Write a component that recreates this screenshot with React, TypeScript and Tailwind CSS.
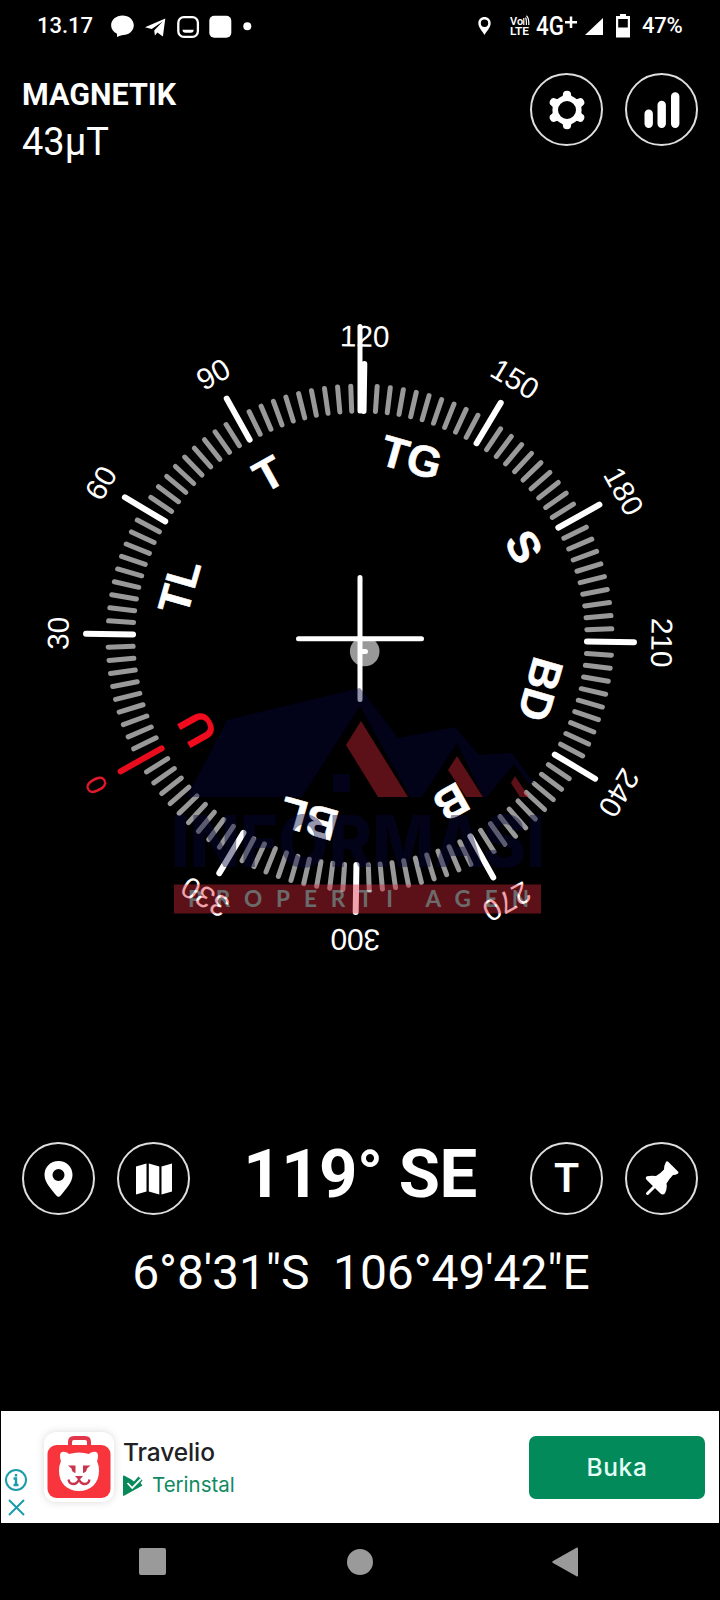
import type { ReactNode } from "react"

const HEADING = 119.1
const CX = 360
const CY = 638

const ticks = Array.from({ length: 120 }, (_, i) => i * 3)
const degrees = [30, 60, 90, 120, 150, 180, 210, 240, 270, 300, 330]
const directions = [
  { label: "TL", at: 45 },
  { label: "T", at: 90 },
  { label: "TG", at: 135 },
  { label: "S", at: 180 },
  { label: "BD", at: 225 },
  { label: "B", at: 270 },
  { label: "BL", at: 315 },
]

function rotateTo(deg: number) {
  return `rotate(${deg - HEADING} ${CX} ${CY})`
}

function RoundButton({ label, children }: { label: string; children: ReactNode }) {
  return (
    <button
      aria-label={label}
      className="flex h-[73px] w-[73px] shrink-0 items-center justify-center rounded-full border-2 border-[#dedede]"
    >
      {children}
    </button>
  )
}

function StatusBar() {
  return (
    <div className="flex h-[52px] items-center pl-[37px] pr-[37px] text-[22px] font-medium leading-none">
      <span className="w-[73px] shrink-0">13.17</span>
      <svg width="142" height="24" viewBox="110 13 142 24" fill="#fff">
        <path d="M122.500 14.500c6.300 0 11.300 4.200 11.300 9.800s-5 9.800-10.500 9.800c-2 .2-4 .8-6.300 2v-3.400c-3.600-1.700-5.900-4.600-5.900-8.400 0-5.600 5-9.800 11.400-9.800z" />
        <path d="M145 26.300l20.300-8.700-2.400 18-5.500-4-2.500 3-.7-5 8.500-9-11 7.300z" />
        <rect x="178.300" y="16.200" width="19.600" height="19.600" rx="5.500" fill="none" stroke="#fff" strokeWidth="2.300" />
        <path d="M182.500 28.800h11.200c0 2-1 3-2.800 3h-5.600c-1.800 0-2.800-1-2.800-3z" />
        <rect x="209.300" y="14.800" width="22" height="22" rx="5" />
        <circle cx="247.300" cy="25.300" r="4" />
      </svg>
      <svg className="ml-auto" width="13" height="18" viewBox="0 0 13 18" fill="#fff">
        <path fillRule="evenodd" d="M6.500 0C2.900 0 .3 2.700.3 6.200c0 4.200 4 7.800 6.200 11.800 2.200-4 6.200-7.600 6.200-11.800C12.700 2.700 10.100 0 6.500 0zm0 2.600a3.700 3.700 0 110 7.400 3.700 3.700 0 010-7.400z" />
      </svg>
      <svg className="ml-[18px] overflow-visible" width="22" height="24" viewBox="0 0 22 24" fill="#fff">
        <text x="1" y="11" fontSize="11" fontWeight="600">Vo</text>
        <path d="M14.800 4v7M16.600 3.500q1 2 .8 7.500M17.500 1.800q2.500 2 2.300 9.200" fill="none" stroke="#fff" strokeWidth="1.200" />
        <text x="1" y="21" fontSize="11.500" fontWeight="600" textLength="19" lengthAdjust="spacingAndGlyphs">LTE</text>
      </svg>
      <svg className="ml-[5px] overflow-visible" width="43" height="30" viewBox="0 0 43 30" fill="#fff">
        <text x="0" y="24" fontSize="26" fontWeight="500" textLength="28" lengthAdjust="spacingAndGlyphs">4G</text>
        <path d="M29 11.300h12M35 5.500v11.600" stroke="#fff" strokeWidth="2.500" />
      </svg>
      <svg className="ml-[6px]" width="18" height="17" viewBox="0 0 18 17" fill="#fff">
        <path d="M18 0v17H0z" />
      </svg>
      <svg className="ml-[13px]" width="14" height="24" viewBox="0 0 14 24" fill="#fff">
        <path fillRule="evenodd" d="M4 0h6v2h4v21.500H0V2h4zM2.200 5v8.500h9.600V5z" />
      </svg>
      <span className="ml-[12px] w-[41px] whitespace-nowrap tracking-[-0.2px]">47%</span>
    </div>
  )
}

function GearIcon() {
  return (
    <svg width="40" height="40" viewBox="-20 -20 40 40" fill="#fff">
      <circle r="11.800" fill="none" stroke="#fff" strokeWidth="5.600" />
      {[0, 60, 120, 180, 240, 300].map((a) => (
        <path key={a} d="M-8-11Q-4.300-12.500-4.100-15.200a4.100 4.100 0 018.200 0Q4.300-12.500 8-11z" transform={`rotate(${a})`} />
      ))}
    </svg>
  )
}

function BarsIcon() {
  return (
    <svg width="36" height="36" viewBox="0 0 36 36" fill="#fff">
      <rect x="0.500" y="17.500" width="8.400" height="18.500" rx="4.200" />
      <rect x="13.500" y="8.800" width="8.400" height="27.200" rx="4.200" />
      <rect x="27" y="0.200" width="8.400" height="35.800" rx="4.200" />
    </svg>
  )
}

// Agency logo laid over the lower half of the dial
function Watermark() {
  return (
    <g opacity="0.42">
      <path
        fill="#05053c"
        d="M360 688L398 738L455 727L479 755L512 753L534 783L528 783L514 764L487 797H483L457 743L422 797H410L360 706L302 797H187L227 720z"
      />
      <rect x="333" y="774" width="17" height="18" fill="#05053c" />
      <g fill="#dc2637">
        <path d="M361 721L346 745L378 797H408z" />
        <path d="M457 756L448 770L466 797H483z" />
        <path d="M515 776L511 783L520 797H529z" />
        <rect x="174" y="884.500" width="367" height="29" />
      </g>
      <text
        x="171"
        y="867"
        fill="#05053c"
        fontSize="71"
        fontWeight="800"
        fontFamily="Inter, sans-serif"
        textLength="374"
        lengthAdjust="spacingAndGlyphs"
      >
        INFORMASI
      </text>
      <text x="188" y="906.500" fill="#fff" fontSize="22.500" fontWeight="700" fontFamily="Lato, sans-serif" textLength="341">
        PROPERTI AGEN
      </text>
    </g>
  )
}

function Compass() {
  return (
    <svg
      width="720"
      height="680"
      viewBox="0 300 720 680"
      strokeLinecap="round"
      textAnchor="middle"
      fontFamily="'Liberation Sans', Arial, sans-serif"
    >
      {ticks.map((deg) => {
        const major = deg % 30 === 0
        return (
          <line
            key={deg}
            x1={CX}
            x2={CX}
            y1={CY - 227}
            y2={CY - (major ? 274 : 252)}
            stroke={deg === 0 ? "#e80c1c" : major ? "#fff" : "#999"}
            strokeWidth={major ? 6 : 5}
            transform={rotateTo(deg)}
          />
        )
      })}
      {degrees.map((deg) => (
        <text key={deg} x={CX} y={CY - 291.500} fontSize="29.800" fill="#fff" transform={rotateTo(deg)}>
          {deg}
        </text>
      ))}
      <text x={CX} y={CY - 292} fontSize="29" fill="#dc1a2c" transform={rotateTo(0)}>
        0
      </text>
      {directions.map(({ label, at }) => (
        <text
          key={label}
          x={CX}
          y={CY - 172.500}
          fontSize="44"
          fontWeight="700"
          fill="#fff"
          stroke="#fff"
          strokeWidth="0.600"
          transform={rotateTo(at)}
        >
          {label}
        </text>
      ))}
      <text
        x={CX}
        y={CY - 171}
        fontSize="45"
        fontWeight="700"
        fill="#f00c1e"
        transform={rotateTo(0)}
      >
        U
      </text>
      <circle cx="364.700" cy="651.500" r="14.800" fill="#999" />
      <path d="M363 651.500h2.500M360 326.500V411M360 577.500V699.500M298.500 638.700H421.500" stroke="#fff" strokeWidth="5" />
      <g textAnchor="start">
        <Watermark />
      </g>
    </svg>
  )
}

function AppLogo() {
  return (
    <div className="flex h-[70px] w-[70px] items-center justify-center rounded-[12px] bg-white shadow-[0_0_8px_rgba(0,0,0,0.15)]">
      <svg width="64" height="62" viewBox="0 0 64 62">
        <path d="M23 11V6q0-4 4-4h11q4 0 4 4v5" fill="none" stroke="#e2364a" strokeWidth="4" />
        <rect x="0.500" y="9" width="63" height="53" rx="9" fill="#f8353d" />
        <path d="M13 20q0-5 5-4 3 .5 4 2 10-3 20 0 1-1.500 4-2 5-1 5 4 0 3-1 5 2 4 2 10c0 12-8 20-20 20s-20-8-20-20q0-6 2-10-1-2-1-5z" fill="#fff" />
        <path d="M21 29.500h7.500v7.500q-3.500-.5-4-4.500zM43.500 29.500h-7.500v7.500q3.500-.5 4-4.500z" fill="#c8354c" />
        <path d="M28 40h8l-4 4.500z" fill="#c8354c" />
        <path d="M21.500 43.500c1 6 8 6 10.500 0c2.500 6 9.500 6 10.500 0" fill="none" stroke="#c8354c" strokeWidth="2.300" />
      </svg>
    </div>
  )
}

function AdBanner() {
  return (
    <div className="mx-px flex h-[112px] items-center bg-white font-['Inter',sans-serif]">
      <div className="flex w-[30px] flex-col items-center gap-[8px] self-end pb-[7px]">
        <svg width="22" height="22" viewBox="0 0 22 22" fill="none" stroke="#1c9cab" strokeWidth="2">
          <circle cx="11" cy="11" r="10" />
          <path d="M11 5v2.600M8.500 9.500H11V16M8.500 16h5" strokeWidth="2.400" />
        </svg>
        <svg width="17" height="17" viewBox="0 0 17 17" stroke="#1c9cab" strokeWidth="2">
          <path d="M1 1l15 15M16 1L1 16" />
        </svg>
      </div>
      <div className="ml-[13px]">
        <AppLogo />
      </div>
      <div className="ml-[9px] flex flex-col pt-[2px]">
        <span className="text-[24.5px] font-medium leading-[30px] tracking-[-0.1px] text-[#202124]">Travelio</span>
        <span className="mt-[4px] flex items-center gap-[9px] text-[20.5px] leading-[28px] text-[#108a5f]">
          <svg width="20" height="21" viewBox="0 0 20 21">
            <path d="M0 1.500Q0 0 1.500.7L8 4.200l3 2.300L15.500 1.500 19.500 5.500 17.500 8 19.500 10.500 1.500 20.600Q0 21.300 0 20z" fill="#078a5a" />
            <path d="M4.500 8l4.700 5L18 4" fill="none" stroke="#fff" strokeWidth="1.800" />
          </svg>
          Terinstal
        </span>
      </div>
      <button className="ml-auto mr-[14px] h-[63px] w-[176px] rounded-[7px] bg-[#028a5b] text-[24.5px] font-medium tracking-[0.6px] text-[#e6fff6]">
        Buka
      </button>
    </div>
  )
}

function NavBar() {
  return (
    <div className="flex h-[77px] items-center justify-between pl-[139px] pr-[141px]">
      <div className="h-[27px] w-[27px] rounded-[2px] bg-[#9a9a9a]" />
      <div className="ml-[2px] h-[26px] w-[26px] rounded-full bg-[#9a9a9a]" />
      <svg width="27" height="30" viewBox="0 0 27 30" fill="#9a9a9a">
        <path d="M1 14L24.500 .8Q26 0 26 1.500v27Q26 30 24.500 29.200L1 16Q-.5 15 1 14z" />
      </svg>
    </div>
  )
}

export default function App() {
  return (
    <main className="flex h-[1600px] w-[720px] flex-col overflow-hidden bg-black font-['Roboto',sans-serif] text-white">
      <StatusBar />

      <header className="flex h-[248px] items-start justify-between px-[22px] pt-[21px]">
        <div>
          <h1 className="pt-[4px] text-[30.5px] font-bold leading-[36px]">MAGNETIK</h1>
          <p className="text-[38px] leading-[58px]">43µT</p>
        </div>
        <div className="flex gap-[22px]">
          <RoundButton label="Setelan">
            <GearIcon />
          </RoundButton>
          <RoundButton label="Grafik">
            <BarsIcon />
          </RoundButton>
        </div>
      </header>

      <Compass />

      <section className="flex h-[431px] flex-col pt-[162px]">
        <div className="flex h-[74px] items-start justify-between px-[22px]">
          <div className="flex gap-[22px]">
            <RoundButton label="Lokasi">
              <svg width="29" height="36" viewBox="0 0 29 36" fill="#fff">
                <path fillRule="evenodd" d="M14.500 0C6.500 0 .5 6 .5 13.700c0 8 7 14.500 11.800 20.900q2.200 2.400 4.400 0C21.500 28.200 28.500 21.700 28.500 13.700 28.500 6 22.500 0 14.500 0zm0 8a6 6 0 110 12 6 6 0 010-12z" />
              </svg>
            </RoundButton>
            <RoundButton label="Peta">
              <svg width="36" height="32" viewBox="0 0 36 32" fill="#fff">
                <path d="M0 3.500L10.500 .5v28L0 31.500zM12.800 .5l10.500 3v28l-10.500-3zM25.500 3.500l10.500-3v28l-10.500 3z" />
              </svg>
            </RoundButton>
          </div>
          <div className="text-[67px] font-bold leading-[64px] tracking-[-0.5px]">119° SE</div>
          <div className="flex gap-[22px]">
            <RoundButton label="T">
              <span className="text-[41px] font-semibold leading-none">T</span>
            </RoundButton>
            <RoundButton label="Sematkan">
              <svg width="34" height="35" viewBox="0 0 34 35" fill="#fff">
                <path d="M21 .8q1-1.300 2.200 0L33 10.600q1 1.400-.3 2.200-2 1.200-4.700 1.200-3.200 3.200-6.500 8.500 1 5-1.500 9.800-2.200 2.400-4.500.2L2 19.200q-2.500-2.500 0-4 4.500-1 9-.2 5-3 8-6.500 0-4 2-7.700z" />
                <path d="M9.500 25.500L2.500 32.500" stroke="#fff" strokeWidth="3" strokeLinecap="round" />
              </svg>
            </RoundButton>
          </div>
        </div>
        <p className="mt-[27px] whitespace-pre pl-[2px] text-center text-[48px] leading-[60px] tracking-[-0.1px]">{`6°8'31"S  106°49'42"E`}</p>
      </section>

      <AdBanner />
      <NavBar />
    </main>
  )
}
